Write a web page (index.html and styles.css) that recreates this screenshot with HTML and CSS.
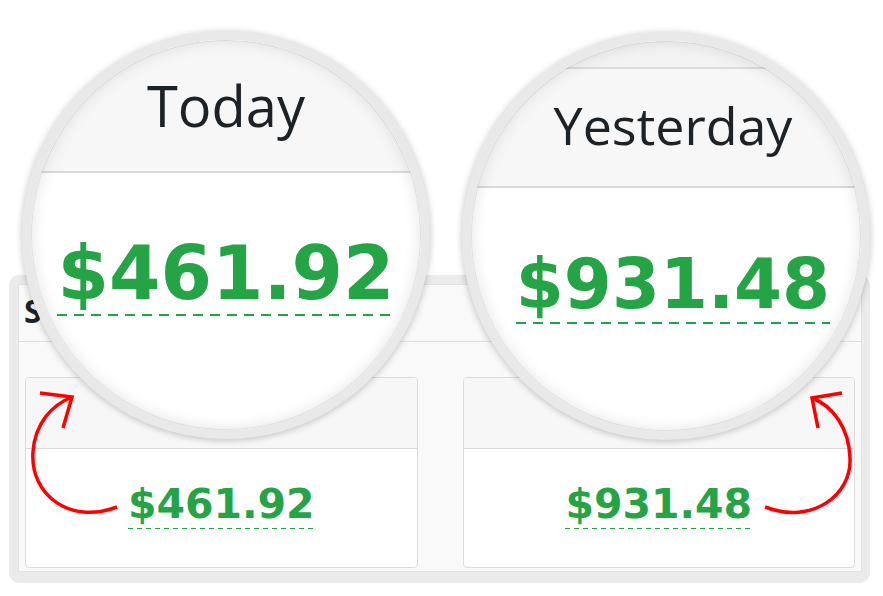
FILE: index.html
```html
<!DOCTYPE html>
<html lang="en">
<head>
<meta charset="utf-8">
<title>Sales Summary</title>
<link rel="stylesheet" href="styles.css">
</head>
<body>
<div class="page">
  <div class="frame">
    <div class="panel">
      <div class="panel-head"><h2 class="panel-title">Sales Summary</h2></div>
      <div class="panel-body">
        <div class="card">
          <div class="card-head">Today</div>
          <div class="card-body"><span class="amount">$461.92</span></div>
        </div>
        <div class="card">
          <div class="card-head">Yesterday</div>
          <div class="card-body"><span class="amount">$931.48</span></div>
        </div>
      </div>
    </div>
  </div>

  <div class="lens lens-left">
    <div class="lens-head">Today</div>
    <div class="lens-body"><span class="lens-amount">$461.92</span></div>
  </div>

  <div class="lens lens-right">
    <div class="lens-top"></div>
    <div class="lens-head">Yesterday</div>
    <div class="lens-body"><span class="lens-amount">$931.48</span></div>
  </div>

  <svg class="arrows" width="883" height="596" viewBox="0 0 883 596" aria-hidden="true">
    <g fill="none" stroke="#ff0000" stroke-width="3.5" stroke-linejoin="miter">
      <path d="M117,507 C70,525 30,495 33,452 C35,423 52,405 72,397"/>
      <path d="M40,393 L72,397 L63,428"/>
      <path d="M765,507 C812,525 852,495 850,458 C849,428 833,406 812,398"/>
      <path d="M842,393 L812,398 L818,428"/>
    </g>
  </svg>
</div>
</body>
</html>
```

FILE: styles.css
```css
* {
  box-sizing: border-box;
  margin: 0;
  padding: 0;
}

body {
  margin: 0;
  background: #ffffff;
  font-family: "Open Sans", "DejaVu Sans", sans-serif;
}

.page {
  position: relative;
  width: 883px;
  height: 596px;
  padding: 275px 13px 0 9px;
  overflow: hidden;
}

.frame {
  width: 861px;
  height: 308px;
  border-style: solid;
  border-color: #ebebeb;
  border-width: 9px 8px 11px 9px;
  border-radius: 10px;
  background: #ebebeb;
}

.panel {
  height: 100%;
  border: 1px solid #e2e2e2;
  background: #f9f9f9;
  display: flex;
  flex-direction: column;
}

.panel-head {
  height: 57px;
  border-bottom: 1px solid #dedede;
  padding: 10px 0 0 5px;
  overflow: hidden;
}

.panel-title {
  font: 700 32px/1 "Open Sans", sans-serif;
  color: #1e2226;
  white-space: nowrap;
}

.panel-body {
  flex: 1;
  display: grid;
  grid-template-columns: 1fr 1fr;
  column-gap: 45px;
  padding: 35px 6px 3px 6px;
}

.card {
  border: 1px solid #dcdcdc;
  border-radius: 4px;
  background: #ffffff;
  display: flex;
  flex-direction: column;
  overflow: hidden;
}

.card-head {
  height: 71px;
  background: #f7f7f7;
  border-bottom: 1px solid #dadada;
  display: flex;
  align-items: center;
  justify-content: center;
  font-size: 20px;
  color: #1d2227;
}

.card-body {
  flex: 1;
  display: flex;
  justify-content: center;
  align-items: flex-start;
  padding-top: 35px;
}

.amount {
  display: block;
  height: 45px;
  font: 700 41px/41px "DejaVu Sans", sans-serif;
  color: #24a445;
  padding-bottom: 3px;
  background: repeating-linear-gradient(90deg, #1fa443 0 5px, transparent 5px 9px) left bottom / 100% 1px no-repeat;
}

/* magnifier lenses */
.lens {
  position: absolute;
  width: 408px;
  height: 408px;
  border-radius: 50%;
  border: 9px solid #e9e9e9;
  background: #ffffff;
  overflow: hidden;
  box-shadow: 0 1px 7px rgba(0, 0, 0, 0.24);
}

.lens::after {
  content: "";
  position: absolute;
  inset: 0;
  border-radius: 50%;
  box-shadow: inset 0 0 16px rgba(0, 0, 0, 0.12), inset 0 0 0 1px rgba(0, 0, 0, 0.07);
}

.lens-left {
  left: 22px;
  top: 31px;
}

.lens-right {
  left: 462px;
  top: 32px;
}

.lens-top {
  height: 28px;
  background: #f3f3f3;
  border-bottom: 2px solid #dcdcdc;
}

.lens-head {
  background: #f7f7f7;
  border-bottom: 2px solid #d9d9d9;
  text-align: center;
  color: #1d2227;
  font-family: "Open Sans", sans-serif;
  font-weight: 400;
  white-space: nowrap;
}

.lens-body {
  display: flex;
  justify-content: center;
  align-items: flex-start;
}

.lens-amount {
  display: block;
  font-family: "DejaVu Sans", sans-serif;
  font-weight: 700;
  color: #24a445;
  white-space: nowrap;
  background: repeating-linear-gradient(90deg, #1fa443 0 10px, transparent 10px 17px) left bottom / 100% 2px no-repeat;
}

.lens-left .lens-head {
  padding: 37px 0 38px;
  font-size: 56px;
  line-height: 56px;
}

.lens-left .lens-body {
  padding-top: 63px;
}

.lens-left .lens-amount {
  font-size: 74px;
  line-height: 74px;
  padding-bottom: 6px;
}

.lens-right .lens-head {
  padding: 30px 0 35px 14px;
  font-size: 52px;
  line-height: 52px;
}

.lens-right .lens-body {
  padding: 62px 0 0 14px;
}

.lens-right .lens-amount {
  font-size: 69px;
  line-height: 69px;
  padding-bottom: 5px;
}

.arrows {
  position: absolute;
  left: 0;
  top: 0;
  pointer-events: none;
}
```
